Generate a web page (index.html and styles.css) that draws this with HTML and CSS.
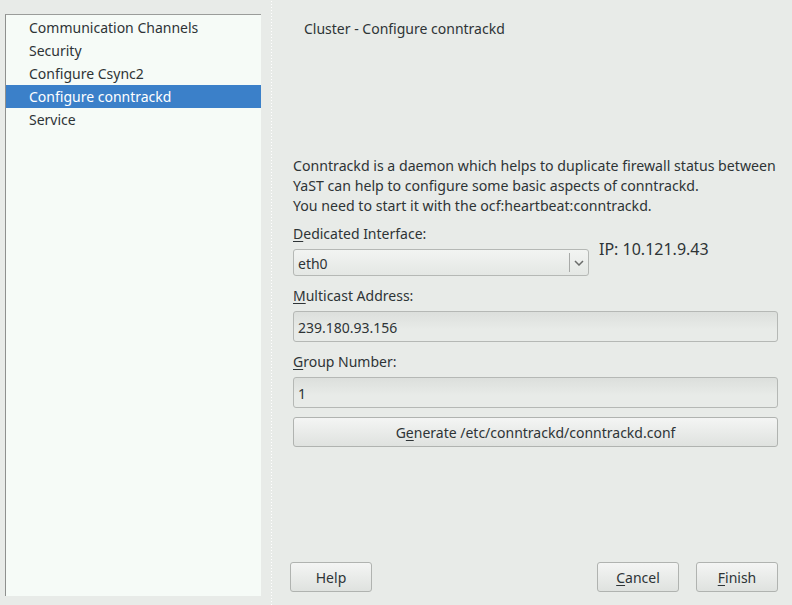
FILE: index.html
```html
<!DOCTYPE html>
<html>
<head>
<meta charset="utf-8">
<link rel="stylesheet" href="styles.css">
</head>
<body>
<div class="app">
  <aside class="sidebar">
    <ul class="steps">
      <li>Communication Channels</li>
      <li>Security</li>
      <li>Configure Csync2</li>
      <li class="active">Configure conntrackd</li>
      <li>Service</li>
    </ul>
  </aside>
  <div class="sep"></div>
  <main class="main">
    <h1 class="title">Cluster - Configure conntrackd</h1>
    <div class="content">
      <p class="desc">Conntrackd is a daemon which helps to duplicate firewall status between<br>YaST can help to configure some basic aspects of conntrackd.<br>You need to start it with the ocf:heartbeat:conntrackd.</p>
      <div class="field">
        <label class="lbl"><u>D</u>edicated Interface:</label>
        <div class="row">
          <div class="combo"><span class="combo-val">eth0</span><span class="combo-btn"><svg width="10" height="6" viewBox="0 0 10 6"><path d="M1 1 L5 5 L9 1" fill="none" stroke="#6a6c6a" stroke-width="1.5"/></svg></span></div>
          <span class="ip">IP: 10.121.9.43</span>
        </div>
      </div>
      <div class="field">
        <label class="lbl"><u>M</u>ulticast Address:</label>
        <div class="input">239.180.93.156</div>
      </div>
      <div class="field">
        <label class="lbl"><u>G</u>roup Number:</label>
        <div class="input">1</div>
      </div>
      <button class="btn wide">G<u>e</u>nerate /etc/conntrackd/conntrackd.conf</button>
    </div>
    <div class="footer">
      <button class="btn foot">Help</button>
      <div class="right">
        <button class="btn foot"><u>C</u>ancel</button>
        <button class="btn foot"><u>F</u>inish</button>
      </div>
    </div>
  </main>
</div>
</body>
</html>
```
FILE: styles.css
```css
html, body {
  margin: 0;
  padding: 0;
  background: #e8ebe8;
  font-family: "Noto Sans", "DejaVu Sans", sans-serif;
  font-size: 14px;
  color: #2e3436;
}
.app {
  display: flex;
  width: 792px;
  height: 605px;
}
.sidebar {
  padding: 14px 0 9px 5px;
  width: 256px;
  display: flex;
}
.steps {
  list-style: none;
  margin: 0;
  padding: 1px 0 0 0;
  flex: 1;
  background: #f6fbf7;
  border-top: 1px solid #9a9c9a;
  border-left: 1px solid #8e908e;
}
.steps li {
  height: 23px;
  line-height: 23px;
  padding-left: 23px;
  color: #2e3436;
}
.steps li.active {
  background: #3b80c9;
  color: #ffffff;
}
.sep {
  width: 3px;
  margin-left: 9px;
  margin-right: 2px;
  background-image: radial-gradient(circle, #ffffff 0.9px, transparent 1px);
  background-size: 3px 3px;
}
.main {
  flex: 1;
  display: flex;
  flex-direction: column;
  padding: 0 14px 0 18px;
}
.title {
  font-size: 14px;
  font-weight: normal;
  margin: 19px 0 0 11px;
  line-height: 20px;
}
.content {
  margin-top: 117px;
  display: flex;
  flex-direction: column;
}
.desc {
  margin: 0 0 -2px 0;
  line-height: 20px;
  font-size: 14.15px;
}
.field {
  display: flex;
  flex-direction: column;
}
.lbl {
  margin-top: 10px;
  line-height: 20px;
}
.lbl u, .btn u { text-decoration: underline; text-underline-offset: 2px; }
.row {
  display: flex;
  align-items: flex-start;
  margin-top: 5px;
}
.combo {
  width: 294px;
  height: 25px;
  border: 1px solid #b5b8b5;
  border-radius: 3px;
  background: linear-gradient(#f2f4f2, #e4e7e4);
  display: flex;
  align-items: center;
}
.combo-val {
  flex: 1;
  padding-left: 4px;
  padding-top: 2px;
}
.combo-btn {
  width: 18px;
  height: 19px;
  border-left: 1px solid #a8aaa8;
  display: flex;
  align-items: center;
  justify-content: center;
}
.ip {
  margin-left: 10px;
  margin-top: -9px;
  font-size: 16px;
  line-height: 18px;
}
.input {
  margin-top: 5px;
  height: 29px;
  line-height: 31px;
  border: 1px solid #b5b8b5;
  border-radius: 3px;
  background: linear-gradient(#dcdfdc, #e8ebe8 60%);
  padding-left: 4px;
}
.btn {
  font-family: "Noto Sans", "DejaVu Sans", sans-serif;
  font-size: 14px;
  color: #2e3436;
  border: 1px solid #b0b3b0;
  border-radius: 3px;
  background: linear-gradient(#f4f5f4, #dfe2df);
  padding: 0;
}
.wide {
  margin-top: 9px;
  height: 30px;
}
.footer {
  margin-top: auto;
  margin-bottom: 13px;
  display: flex;
  justify-content: space-between;
  margin-left: -3px;
}
.right {
  display: flex;
  gap: 17px;
}
.foot {
  width: 82px;
  height: 30px;
}
```
